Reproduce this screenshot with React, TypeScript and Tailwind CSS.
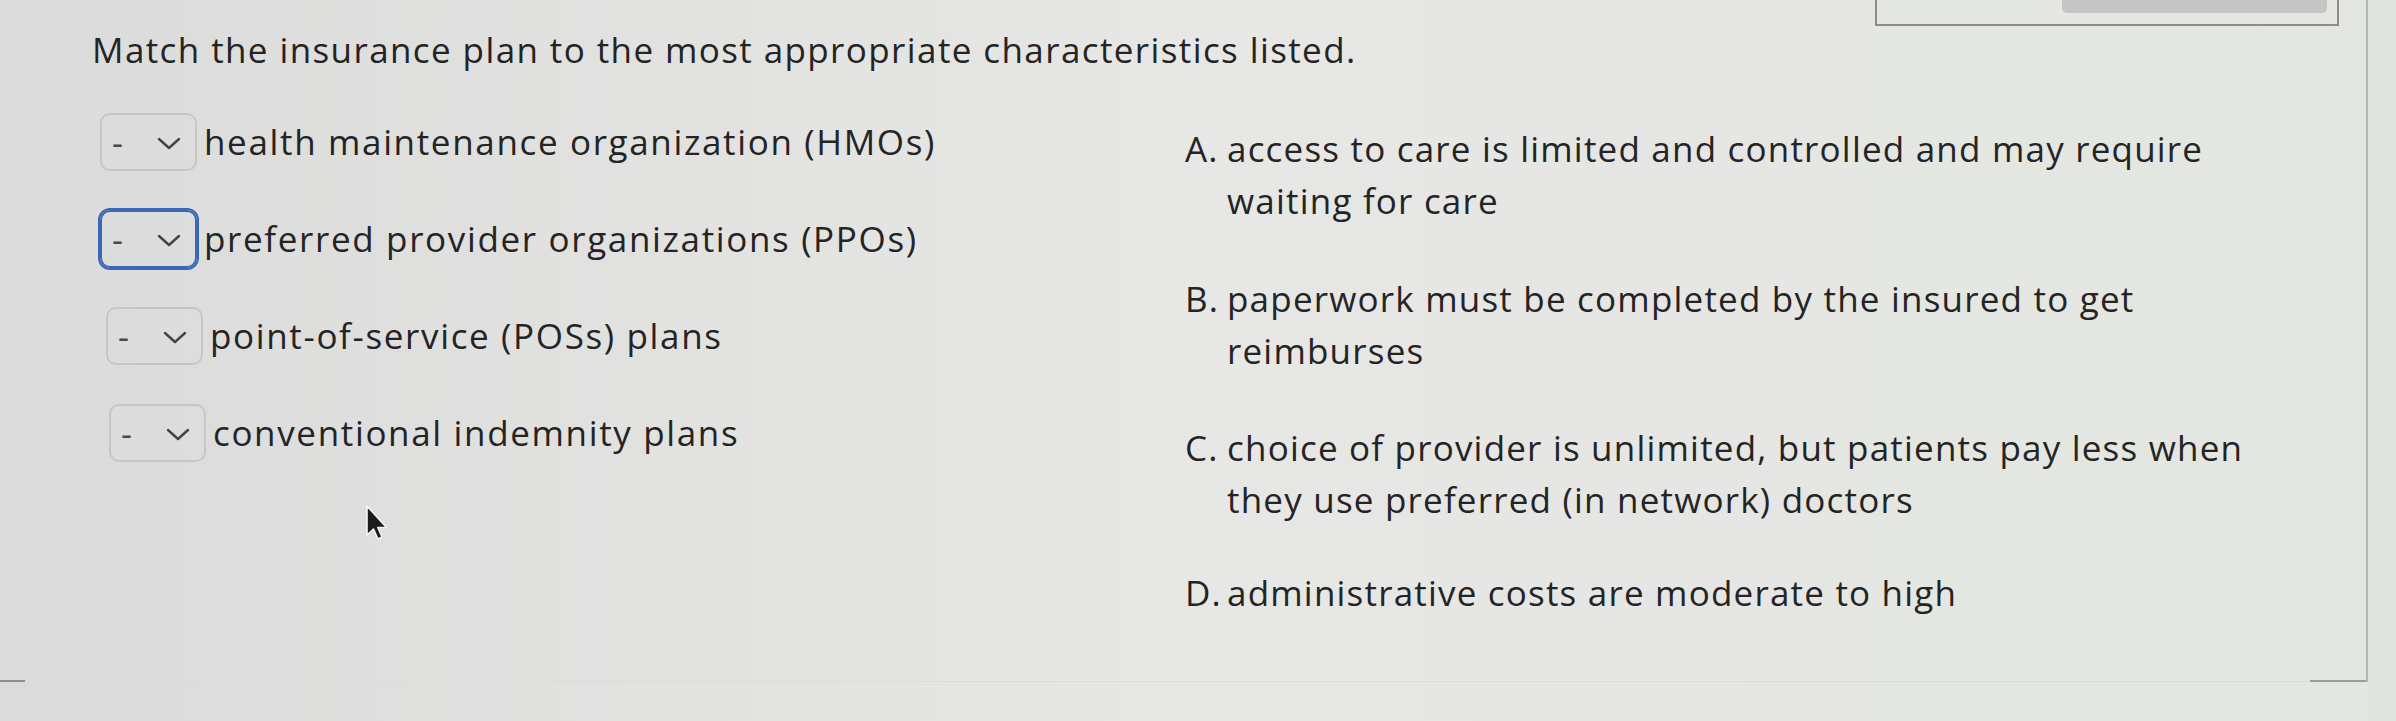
import React from 'react';

const PLANS = [
  { id: 'hmo', label: 'health maintenance organization (HMOs)', focused: false, shift: 'ml-0' },
  { id: 'ppo', label: 'preferred provider organizations (PPOs)', focused: true, shift: 'ml-0' },
  { id: 'pos', label: 'point-of-service (POSs) plans', focused: false, shift: 'ml-[6px]' },
  { id: 'ind', label: 'conventional indemnity plans', focused: false, shift: 'ml-[9px]' },
];

const CHARACTERISTICS = [
  { key: 'A.', text: 'access to care is limited and controlled and may require waiting for care', gap: 'mt-0' },
  { key: 'B.', text: 'paperwork must be completed by the insured to get reimburses', gap: 'mt-[46px]' },
  { key: 'C.', text: 'choice of provider is unlimited, but patients pay less when they use preferred (in network) doctors', gap: 'mt-[45px]' },
  { key: 'D.', text: 'administrative costs are moderate to high', gap: 'mt-[41px]' },
];

function MatchSelect({ focused }: { focused: boolean }) {
  return (
    <div
      className={`flex h-[58px] w-[97px] shrink-0 items-center rounded-[10px] border-2 pl-[10px] ${
        focused ? 'border-[#3b68b4] ring-2 ring-[#3b68b4]' : 'border-[#c6c6c6]'
      }`}
    >
      <span className="text-[34px] leading-none text-[#4a4a4a]">-</span>
      <svg className="ml-[34px] mt-[2px] h-[13px] w-[24px]" viewBox="0 0 24 13" fill="none">
        <polyline points="2,2 12,11 22,2" stroke="#444" strokeWidth="2.4" strokeLinecap="round" strokeLinejoin="round" />
      </svg>
    </div>
  );
}

export default function App() {
  return (
    <div
      className="relative flex h-[721px] w-[2396px] overflow-hidden bg-linear-to-r from-[#dbdbdb] via-[#e7e7e5] to-[#e3e6e1] text-[#242424]"
      style={{ fontFamily: '"Open Sans", "Liberation Sans", sans-serif' }}
    >
      <div className="flex h-[682px] w-[2368px] shrink-0 flex-col border-r-2 border-[#b3b6b1]">
        {/* top toolbar stub */}
        <div className="flex h-[26px] justify-end pr-[27px]">
          <div className="flex h-[26px] w-[464px] justify-end border-2 border-t-0 border-[#8d8d8d] pr-[10px]">
            <div className="h-[13px] w-[265px] rounded-b-[5px] bg-[#c5c5c5]" />
          </div>
        </div>

        <h1 className="mt-[7px] pl-[92px] text-[35px] leading-[34px] font-normal tracking-[1.4px]">
          Match the insurance plan to the most appropriate characteristics listed.
        </h1>

        <div className="mt-[45px] flex">
          {/* plans */}
          <div className="flex w-[1185px] shrink-0 flex-col gap-[39px] pl-[100px] pt-[1px]">
            {PLANS.map((p) => (
              <div key={p.id} className={`flex items-center ${p.shift}`}>
                <MatchSelect focused={p.focused} />
                <span className="ml-[7px] text-[35px] leading-[46px] tracking-[1.65px]">{p.label}</span>
              </div>
            ))}
          </div>

          {/* characteristics */}
          <div className="flex flex-col pt-[11px]">
            {CHARACTERISTICS.map((c) => (
              <div key={c.key} className={`flex text-[35px] leading-[52px] tracking-[1.2px] ${c.gap}`}>
                <span className="w-[42px] shrink-0">{c.key}</span>
                <span className="w-[1048px]">{c.text}</span>
              </div>
            ))}
          </div>
        </div>

        {/* bottom rule */}
        <div className="mt-auto flex h-[2px] items-end">
          <div className="h-[2px] w-[25px] bg-[#8f8f8f]" />
          <div className="h-[1px] flex-1 bg-[#dcdcdc]" />
          <div className="h-[2px] w-[56px] bg-[#9a9d98]" />
        </div>
      </div>
      <div className="flex-1 bg-[#e0e3de]" />

      {/* mouse pointer */}
      <svg className="absolute left-[365px] top-[504px] h-[38px] w-[24px]" viewBox="0 0 24 38" fill="none">
        <path
          d="M2 2 L2 31 L8.5 25 L13 35 L17 33 L12.8 23.5 L21.5 23.5 Z"
          fill="#1c1c1c"
          stroke="#f4f4f4"
          strokeWidth="1.6"
          strokeLinejoin="round"
        />
      </svg>
    </div>
  );
}
